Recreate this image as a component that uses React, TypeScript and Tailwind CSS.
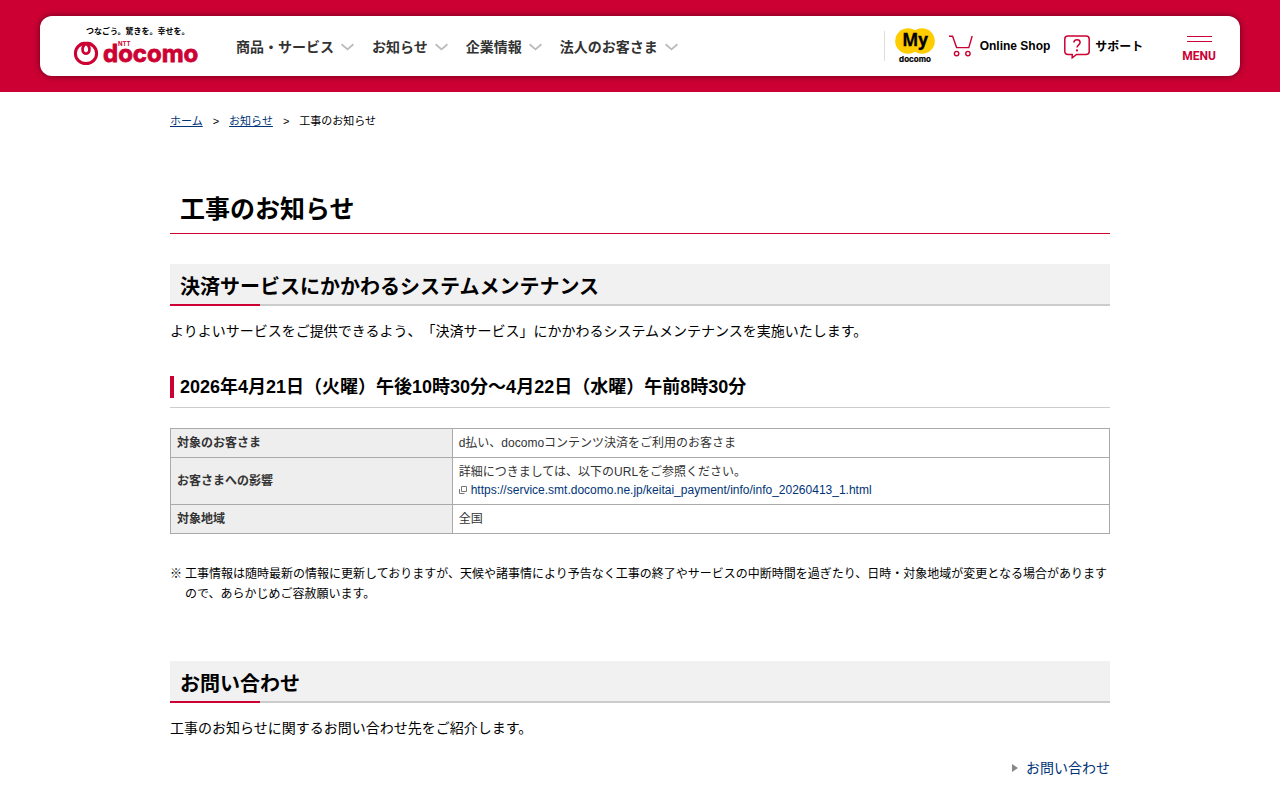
import React from "react";

interface NavItem {
  label: string;
  href: string;
}

interface SectionProps {
  children: React.ReactNode;
}

const navItems: NavItem[] = [
  { label: "商品・サービス", href: "#service" },
  { label: "お知らせ", href: "#info" },
  { label: "企業情報", href: "#corporate" },
  { label: "法人のお客さま", href: "#biz" },
];

const infoUrl =
  "https://service.smt.docomo.ne.jp/keitai_payment/info/info_20260413_1.html";

const Logo = () => (
  <a href="#top" aria-label="NTT docomo" className="shrink-0">
    <svg width="130" height="50" viewBox="0 -4 130 50">
      <text
        x="14"
        y="9"
        fontSize="8"
        className="fill-black font-['Noto_Sans_CJK_JP',sans-serif] font-bold"
      >
        つなごう。驚きを。幸せを。
      </text>
      <g fill="none" stroke="#cc0033">
        <ellipse cx="14" cy="28.4" rx="10.6" ry="10.2" strokeWidth="3" />
        <path
          d="M7.4 20.4C10 16.8 14.6 17.6 16.6 21C18.6 24.4 17.2 28.6 14 28.6C10.8 28.6 9.4 24.4 11.4 21C13.4 17.6 18 16.8 20.6 20.4"
          strokeWidth="2.8"
        />
      </g>
      <text
        x="46"
        y="21"
        fontSize="6"
        className="fill-[#cc0033] font-['Inter',sans-serif] font-bold"
      >
        NTT
      </text>
      <text
        x="31"
        y="37"
        fontSize="24"
        stroke="#cc0033"
        strokeWidth="0.8"
        className="fill-[#cc0033] font-['Inter',sans-serif] font-bold"
      >
        docomo
      </text>
    </svg>
  </a>
);

const Chevron = () => (
  <svg width="13" height="8" viewBox="0 0 13 8" aria-hidden="true">
    <path
      d="M.6 1.2L6.5 6.4L12.4 1.2"
      fill="none"
      stroke="#bbb"
      strokeWidth="1.8"
    />
  </svg>
);

const MyDocomoIcon = () => (
  <svg width="40" height="38" viewBox="0 0 40 38">
    <circle cx="13" cy="14" r="12.8" fill="#ffcc00" />
    <circle cx="27" cy="14" r="12.8" fill="#ffcc00" />
    <text
      x="20"
      y="19"
      fontSize="17"
      stroke="#000"
      strokeWidth="0.3"
      textAnchor="middle"
      className="font-['Open_Sans',sans-serif] font-bold"
    >
      My
    </text>
    <text
      x="20"
      y="35"
      fontSize="8"
      stroke="#000"
      strokeWidth="0.2"
      textAnchor="middle"
      className="font-['Inter',sans-serif] font-bold"
    >
      docomo
    </text>
  </svg>
);

const CartIcon = () => (
  <svg width="24" height="22" viewBox="0 0 24 22" aria-hidden="true">
    <g fill="none" stroke="#cc0033" strokeWidth="1.4">
      <path d="M0 1.2H3.6L7.6 12.6H19.8L23.2 1" />
      <circle cx="7.6" cy="18.6" r="2.2" />
      <circle cx="18.9" cy="18.6" r="2.2" />
    </g>
  </svg>
);

const SupportIcon = () => (
  <svg width="26" height="24" viewBox="0 0 26 24" aria-hidden="true">
    <path
      d="M4 1H22Q25.2 1 25.2 4V16.4Q25.2 19.4 22 19.4H12.6L8.2 22.8V19.4H4Q.8 19.4 .8 16.4V4Q.8 1 4 1Z"
      fill="none"
      stroke="#cc0033"
      strokeWidth="1.5"
    />
    <path
      d="M9.9 7.6C9.9 5.8 11.2 4.8 13 4.8C14.8 4.8 16.1 5.9 16.1 7.5C16.1 9.8 13 9.9 13 12.6"
      fill="none"
      stroke="#cc0033"
      strokeWidth="1.5"
    />
    <circle cx="13" cy="15.4" r="1.1" fill="#cc0033" />
  </svg>
);

const WindowIcon = () => (
  <svg width="8" height="8" viewBox="0 0 8 8" aria-hidden="true">
    <path
      d="M2.5 .5H7.5V5.5H2.5ZM.5 3V7.5H5.5"
      fill="none"
      stroke="#777"
    />
  </svg>
);

const Header = () => (
  <header className="bg-[#cc0033] px-10 py-4">
    <div className="flex h-15 items-center rounded-xl bg-white pr-5 pl-8 shadow-[0_0_6px_rgba(0,0,0,0.5)]">
      <Logo />
      <nav className="ml-[34px] flex items-center gap-[18px] pt-0.5">
        {navItems.map((item) => (
          <a
            key={item.label}
            href={item.href}
            className="flex items-center gap-[7px] text-sm font-bold whitespace-nowrap text-[#333]"
          >
            {item.label}
            <Chevron />
          </a>
        ))}
      </nav>
      <div className="ml-auto flex items-center text-xs font-bold whitespace-nowrap">
        <span className="mr-2.5 h-[30px] w-px bg-[#ddd]" />
        <a href="#mydocomo">
          <MyDocomoIcon />
        </a>
        <a href="#shop" className="ml-3.5 flex items-center gap-[7px]">
          <CartIcon />
          Online Shop
        </a>
        <a href="#support" className="ml-3.5 flex items-center gap-[5px] pt-0.5">
          <SupportIcon />
          サポート
        </a>
        <button
          type="button"
          className="ml-[35px] flex flex-col items-center px-1 pt-2 text-[#cc0033]"
        >
          <span className="mb-1.5 block h-1.5 w-[25px] border-y border-[#cc0033]" />
          <span className="font-['Roboto',sans-serif] text-xs">MENU</span>
        </button>
      </div>
    </div>
  </header>
);

const SectionTitle: React.FC<SectionProps> = ({ children }) => (
  <h2 className="relative border-b-2 border-[#ccc] bg-[#f1f1f1] px-2.5 pt-[9px] pb-[3px] text-xl leading-7 font-bold">
    {children}
    <span className="absolute -bottom-0.5 left-0 h-0.5 w-[90px] bg-[#cc0033]" />
  </h2>
);

const Row: React.FC<SectionProps & { label: string }> = ({
  label,
  children,
}) => (
  <tr>
    <th
      scope="row"
      className="w-3/10 border border-[#aaa] bg-[#eee] px-1.5 py-[5px] text-left font-bold"
    >
      {label}
    </th>
    <td className="border border-[#aaa] px-1.5 py-[5px]">{children}</td>
  </tr>
);

const App = () => {
  return (
    <div
      lang="ja"
      className="bg-white font-['Liberation_Sans','Noto_Sans_CJK_JP',sans-serif] text-black [text-spacing-trim:space-all]"
    >
      <Header />
      <main className="mx-auto max-w-[940px] pb-4">
        <ol className="flex gap-2.5 pt-[21px] text-[11px] leading-4">
          <li>
            <a href="#home" className="text-[#003377] underline">
              ホーム
            </a>
          </li>
          <li aria-hidden="true">&gt;</li>
          <li>
            <a href="#info" className="text-[#003377] underline">
              お知らせ
            </a>
          </li>
          <li aria-hidden="true">&gt;</li>
          <li>工事のお知らせ</li>
        </ol>

        <h1 className="mt-16 border-b border-[#cc0033] px-2.5 pb-2 text-[25px] leading-8 font-bold">
          工事のお知らせ
        </h1>

        <section className="mt-[30px]">
          <SectionTitle>
            決済サービスにかかわるシステムメンテナンス
          </SectionTitle>
          <p className="mt-[15px] text-sm leading-5">
            よりよいサービスをご提供できるよう、「決済サービス」にかかわるシステムメンテナンスを実施いたします。
          </p>

          <div className="mt-[35px] border-b border-[#ccc] pb-[9px]">
            <h3 className="border-l-4 border-[#cc0033] pl-1.5 text-lg leading-[22px] font-bold">
              2026年4月21日（火曜）午後10時30分～4月22日（水曜）午前8時30分
            </h3>
          </div>

          <table className="mt-5 w-full border-collapse text-xs leading-[18px] text-[#333]">
            <tbody>
              <Row label="対象のお客さま">
                d払い、docomoコンテンツ決済をご利用のお客さま
              </Row>
              <Row label="お客さまへの影響">
                <p>詳細につきましては、以下のURLをご参照ください。</p>
                <a
                  href={infoUrl}
                  className="flex items-center gap-1 text-[#003377]"
                >
                  <WindowIcon />
                  {infoUrl}
                </a>
              </Row>
              <Row label="対象地域">全国</Row>
            </tbody>
          </table>

          <p className="mt-[30px] flex gap-[3px] text-xs leading-5">
            <span>※</span>
            <span>
              工事情報は随時最新の情報に更新しておりますが、天候や諸事情により予告なく工事の終了やサービスの中断時間を過ぎたり、日時・対象地域が変更となる場合がありますので、あらかじめご容赦願います。
            </span>
          </p>
        </section>

        <section className="mt-[57px]">
          <SectionTitle>お問い合わせ</SectionTitle>
          <p className="mt-[15px] text-sm leading-5">
            工事のお知らせに関するお問い合わせ先をご紹介します。
          </p>
          <p className="mt-5 flex justify-end text-sm leading-5">
            <a
              href="#contact"
              className="flex items-center gap-2 text-[#003377]"
            >
              <svg width="6" height="8" viewBox="0 0 6 8" aria-hidden="true">
                <path d="M0 0L6 4L0 8Z" fill="#888" />
              </svg>
              お問い合わせ
            </a>
          </p>
        </section>
      </main>
    </div>
  );
};

export default App;
